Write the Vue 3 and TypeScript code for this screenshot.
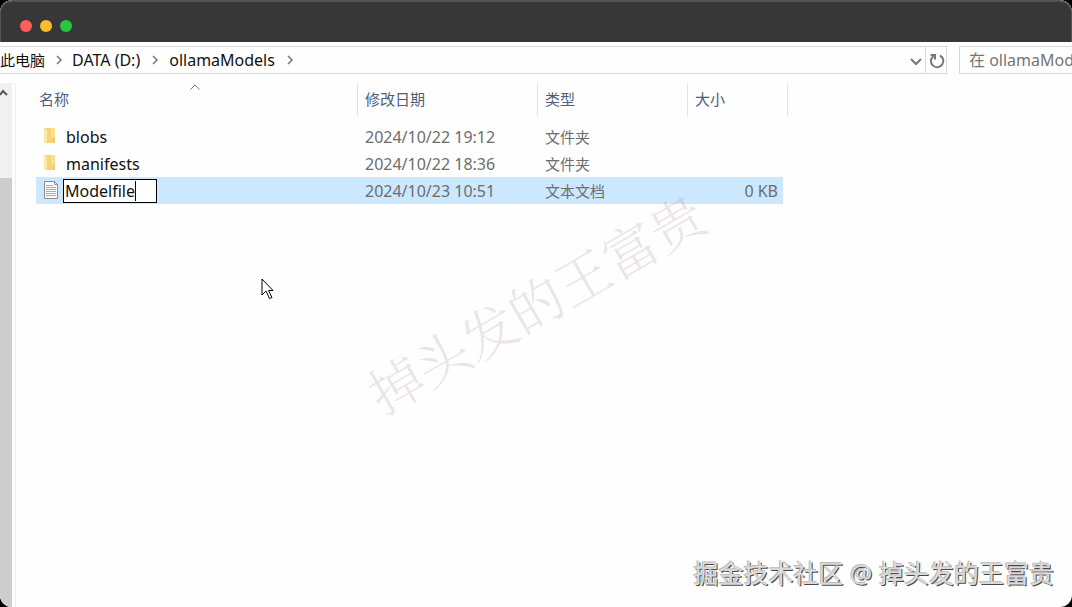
<script setup lang="ts">
import { ref } from 'vue'

interface Entry {
  name: string
  date: string
  kind: string
  size: string
  folder: boolean
}

const lights: string[] = ['red', 'amber', 'green']
const drive = ['DATA (D:)', 'ollamaModels']
const entries: Entry[] = [
  { name: 'blobs', date: '2024/10/22 19:12', kind: '文件夹', size: '', folder: true },
  { name: 'manifests', date: '2024/10/22 18:36', kind: '文件夹', size: '', folder: true },
]
const draft = ref('Modelfile')
const query = ref('')
</script>

<template>
  <div class="window">
    <header class="titlebar">
      <span v-for="c in lights" :key="c" class="light" :class="c"></span>
    </header>

    <div class="toolbar">
      <nav class="address" aria-label="路径">
        <a href="#" class="crumb cjk">此电脑</a>
        <svg class="sep" viewBox="0 0 8 10"><path d="M2 1l4 4-4 4" /></svg>
        <template v-for="d in drive" :key="d">
          <a href="#" class="crumb">{{ d }}</a>
          <svg class="sep" viewBox="0 0 8 10"><path d="M2 1l4 4-4 4" /></svg>
        </template>
        <button class="drop" aria-label="历史记录">
          <svg width="12" height="8" viewBox="0 0 12 8"><path d="M1 1l5 5 5-5" /></svg>
        </button>
        <button class="reload" aria-label="刷新">
          <svg width="16" height="16" viewBox="0 0 16 16">
            <path d="M11 2.500A6.200 6.200 0 1 1 4.500 3" />
            <path d="M1.500 2H6V6.500" />
          </svg>
        </button>
      </nav>
      <input v-model="query" class="search" type="text" aria-label="搜索" placeholder="在 ollamaModels 中搜索" />
    </div>

    <div class="body">
      <aside class="scroll">
        <button class="up" aria-label="向上滚动">
          <svg width="10" height="8" viewBox="0 0 10 8"><path d="M0 6l3-4 4 4" /></svg>
        </button>
        <div class="thumb"></div>
      </aside>

      <main class="pane">
        <table class="files">
          <colgroup>
            <col class="c-name" /><col class="c-date" /><col class="c-kind" /><col class="c-size" />
          </colgroup>
          <thead>
            <tr>
              <th class="sorted">
                名称
                <svg class="sort" width="10" height="6" viewBox="0 0 10 6"><path d="M.5 5.500l4.500-4.500 4.500 4.500" /></svg>
              </th>
              <th>修改日期</th>
              <th>类型</th>
              <th>大小</th>
            </tr>
          </thead>
          <tbody>
            <tr v-for="e in entries" :key="e.name">
              <td class="name">
                <div class="label">
                  <svg class="icon" width="16" height="20" viewBox="0 0 16 20">
                    <path d="M1 1h11v15H4L1 15z" fill="#f4d676" />
                    <path d="M1 1l3 2v14l-3-2z" fill="#fbe9ab" />
                    <path d="M8 1h4v9l-2 1-2-3z" fill="#f8df91" />
                    <path d="M10 11h2v5h-2z" fill="#f2cb62" />
                  </svg>
                  <span>{{ e.name }}</span>
                </div>
              </td>
              <td>{{ e.date }}</td>
              <td class="cjk">{{ e.kind }}</td>
              <td class="size">{{ e.size }}</td>
            </tr>
            <tr class="selected">
              <td class="name">
                <div class="label editing">
                  <svg class="icon doc" width="16" height="22" viewBox="0 0 16 22">
                    <path d="M1.500 1.500h10l3 3v14h-13z" fill="#fafafa" stroke="#8b8f92" />
                    <path d="M11.500 1.500v3h3" fill="none" stroke="#8b8f92" />
                    <path d="M3 5.500h7M3 7.500h10M3 9.500h10M3 11.500h10M3 13.500h10M3 15.500h10" fill="none" stroke="#a9adb0" />
                  </svg>
                  <span class="edit">
                    <input v-model="draft" class="rename" type="text" aria-label="文件名" />
                    <i class="caret"></i>
                  </span>
                </div>
              </td>
              <td>2024/10/23 10:51</td>
              <td class="cjk">文本文档</td>
              <td class="size">0 KB</td>
            </tr>
          </tbody>
        </table>
      </main>
    </div>

    <div class="stamp">掉头发的王富贵</div>
    <svg class="pointer" width="14" height="22" viewBox="0 0 14 22">
      <path d="M1 1v16l4-4 3.500 7.500 2.500-1-3.500-7H12z" fill="#fff" stroke="#000" />
    </svg>
    <footer class="credit">掘金技术社区 @ 掉头发的王富贵</footer>
  </div>
</template>

<style>
html,
body {
  background: #000;
}
</style>

<style scoped>
* {
  box-sizing: border-box;
}
.window {
  position: relative;
  display: flex;
  flex-direction: column;
  min-height: 100vh;
  overflow: hidden;
  border-radius: 12px;
  background: #fefefe;
  font-family: "Noto Sans", "Noto Sans CJK SC", sans-serif;
  font-size: 16px;
  line-height: 24px;
  color: #111;
}
.titlebar {
  display: flex;
  align-items: center;
  gap: 8px;
  height: 42px;
  padding: 8px 19px 0;
  background: #373737;
  border: 1px solid #555;
  border-width: 2px 1px 0;
  border-radius: 12px 12px 0 0;
}
.light {
  width: 12px;
  height: 12px;
  border-radius: 50%;
}
.red { background: #ff5f57; }
.amber { background: #febc2e; }
.green { background: #28c840; }

button {
  display: flex;
  align-items: center;
  justify-content: center;
  padding: 0;
  border: 0;
  background: none;
}
svg {
  flex: none;
}
.toolbar {
  display: flex;
  gap: 12px;
  height: 28px;
  margin-top: 4px;
}
.address {
  flex: 1;
  display: flex;
  align-items: center;
  border: 1px solid #d9d9d9;
  border-left: 0;
}
.crumb {
  padding-bottom: 1px;
  color: #111;
  text-decoration: none;
  white-space: nowrap;
}
.cjk {
  font-size: 15px;
}
.sep {
  width: 8px;
  height: 10px;
  margin: 0 9px 0 10px;
}
.crumb:not(.cjk) + .sep {
  margin: 0 10px 0 11px;
}
.sep path,
.drop path,
.reload path {
  fill: none;
  stroke: #777;
  stroke-width: 2;
}
.sep path {
  stroke-width: 1.500;
}
.drop {
  width: 18px;
  height: 26px;
  margin-left: auto;
}
.drop svg {
  margin-top: 3px;
}
.reload {
  width: 21px;
  height: 26px;
  padding: 2px 0 0 2px;
  border-left: 1px solid #d9d9d9;
}
.search {
  width: 113px;
  padding: 0 0 0 9px;
  border: 1px solid #d9d9d9;
  border-right: 0;
  border-radius: 0;
  background: #fefefe;
  font: inherit;
  outline: 0;
}
.search::placeholder {
  color: #757575;
  opacity: 1;
}
.body {
  flex: 1;
  display: flex;
  margin-top: 9px;
}
.scroll {
  width: 12px;
  background: #f0f0f0;
  display: flex;
  flex-direction: column;
}
.up {
  width: 10px;
  height: 20px;
}
.up path {
  fill: none;
  stroke: #555;
  stroke-width: 2;
}
.thumb {
  flex: 1;
  margin-top: 75px;
  background: #cdcdcd;
}
.pane {
  flex: 1;
  margin-left: 3px;
  padding-left: 20px;
  border-left: 1px solid #eee;
}
.files {
  width: 752px;
  table-layout: fixed;
  border-collapse: separate;
  border-spacing: 0;
}
.c-name { width: 322px; }
.c-date { width: 180px; }
.c-kind { width: 150px; }
.c-size { width: 100px; }
th {
  height: 33px;
  padding: 0 7px 2px;
  border-right: 1px solid #e2e2e2;
  font-size: 15px;
  font-weight: 400;
  text-align: left;
  color: #4c607a;
}
.sorted {
  position: relative;
  padding-left: 3px;
}
.sort {
  position: absolute;
  top: 1px;
  left: calc(50% - 7px);
  fill: none;
  stroke: #777;
}
tbody::before {
  content: "";
  display: block;
  height: 7px;
}
td {
  height: 27px;
  padding: 0 7px;
  color: #6d6d6d;
  white-space: nowrap;
}
td.name {
  padding: 0 0 0 7px;
  color: #111;
}
td.size {
  padding-right: 10px;
  text-align: right;
}
.label {
  display: flex;
  align-items: center;
  gap: 7px;
}
.label.editing {
  gap: 4px;
}
.selected {
  background: linear-gradient(#cce8ff, #cce8ff) no-repeat;
  background-size: calc(100% - 5px) 100%;
}
.edit {
  position: relative;
  display: flex;
}
.rename {
  width: 94px;
  height: 24px;
  padding: 0 1px;
  border: 1px solid #000;
  border-radius: 0;
  background: #fff;
  color: #111;
  font: inherit;
  outline: 0;
  caret-color: transparent;
}
.caret {
  position: absolute;
  left: 72px;
  top: 2px;
  width: 1px;
  height: 20px;
  background: #000;
}
.stamp {
  position: absolute;
  left: 535px;
  top: 302px;
  transform: translate(-50%, -50%) rotate(-30deg);
  white-space: nowrap;
  font-family: "Noto Serif CJK SC", "Noto Sans CJK SC", serif;
  font-weight: 300;
  font-size: 54px;
  line-height: 64px;
  color: rgba(150, 105, 105, 0.17);
  pointer-events: none;
}
.pointer {
  position: absolute;
  left: 261px;
  top: 278px;
}
.credit {
  position: absolute;
  right: 18px;
  bottom: 16px;
  font-family: "Noto Sans", "Noto Sans CJK SC", sans-serif;
  font-size: 25px;
  line-height: 36px;
  color: #dcdada;
  text-shadow: -1px -1px 0 #bbb, 1px 1px 0 #484848;
}
</style>
